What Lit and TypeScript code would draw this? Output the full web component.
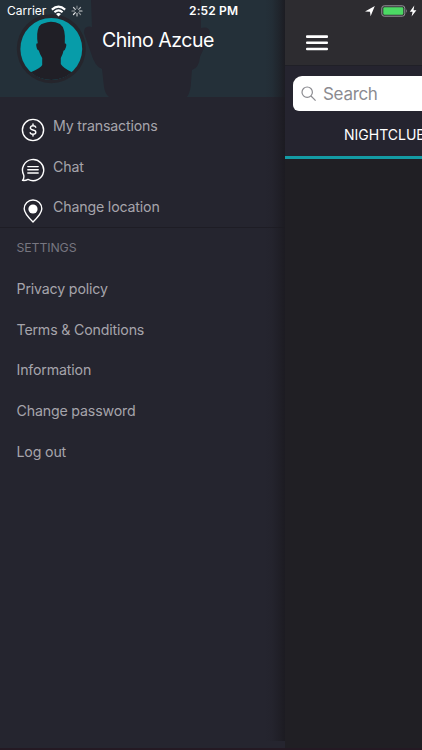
import { LitElement, html, css, svg } from "lit";
import { customElement } from "lit/decorators.js";

const coin = svg`<circle cx="12" cy="12" r="10.6"/><path d="M14.8 9.2Q14.3 7.8 12 7.8T9.3 9.8Q9.3 11.5 12 12T14.8 14.2Q14.8 16.2 12 16.2T9.2 14.6M12 6v1.8M12 16.2V18"/>`;
const chat = svg`<path d="M2.7 17A10.6 10.6 0 1 1 7 21.4Q4.5 22.8 1.5 22.4Q3.4 20.6 2.7 17Z"/><path d="M6.8 8.6H17.2M6.8 11.8H17.2M6.8 15H17.2"/>`;
const pin = svg`<path d="M12 23Q3.2 14.5 3.2 9.8A8.8 8.8 0 0 1 20.8 9.8Q20.8 14.5 12 23Z"/><circle cx="12" cy="10" r="4.6" fill="#fff" stroke="none"/>`;

@customElement("app-root")
export class AppRoot extends LitElement {
  static styles = css`
    :host {
      display: block;
      position: relative;
      width: 422px;
      height: 750px;
      overflow: hidden;
      background: #25252f;
      color: #fff;
      font-family: Inter, "Liberation Sans", sans-serif;
      white-space: nowrap;
    }
    svg { display: block; flex: none; }
    .layout { display: grid; grid-template-columns: 285px 1fr; height: 748px; border-bottom: 2px solid #241923; }
    .drawer { position: relative; overflow: hidden; }
    .drawer::after {
      content: "";
      position: absolute;
      inset: 0 0 7px auto;
      width: 20px;
      background: linear-gradient(90deg, #1b1a2000, #1b1a2020 35%, #1b1a2090 75%, #1b1a20e6);
      pointer-events: none;
    }
    .profile { position: relative; height: 97px; background: #243039; }
    .backdrop, .avatar { position: absolute; top: 0; left: 0; }
    .name {
      position: relative;
      padding: 27px 0 0 102px;
      font-size: 19.5px;
      line-height: 26px;
      letter-spacing: -0.48px;
    }
    .links { height: 131px; padding-top: 8px; box-sizing: border-box; border-bottom: 1px solid #1e1d25; }
    .link { display: flex; height: 40.7px; padding-left: 21px; gap: 8px; font-size: 14.2px; line-height: 42px; color: #a5a4ab; }
    .link svg { margin-top: 12.5px; fill: none; stroke: #fff; stroke-width: 1.4; stroke-linecap: round; stroke-linejoin: round; }
    .text, .item { letter-spacing: -0.17px; }
    .heading { padding-left: 16.5px; height: 40px; line-height: 40px; font-size: 12.3px; letter-spacing: -0.1px; color: #777680; }
    .item { padding-left: 16.5px; height: 40.7px; line-height: 42px; font-size: 14.2px; color: #a5a4ab; }
    .main { background: #201f24; overflow: hidden; }
    .bar { height: 66px; box-sizing: border-box; padding: 35px 0 0 21px; background: #2d2c30; border-bottom: 1px solid #202027; }
    .tools { height: 90px; background: #25242f; box-sizing: border-box; padding: 10px 0 0 8px; }
    .search {
      height: 35px;
      display: flex;
      align-items: center;
      gap: 6px;
      padding-left: 8px;
      border-radius: 9px 0 0 6px;
      background: #fff;
      color: #8b8b90;
      font-size: 17px;
      letter-spacing: -0.3px;
    }
    .tab { padding-left: 51px; line-height: 48px; font-size: 14px; }
    .underline { height: 3px; background: #149ba5; }
    .status { position: absolute; inset: 0 0 auto 0; height: 21px; display: grid; grid-template-columns: 189px 1fr auto; align-items: center; font-size: 12px; }
    .left, .right { display: flex; align-items: center; }
    .left { padding-left: 7px; gap: 5px; }
    .clock { font-weight: 600; letter-spacing: 0.15px; }
    .right { padding-right: 5px; }
  `;

  private link(icon: unknown, label: string) {
    return html`<div class="link"><svg width="24" height="24" viewBox="0 0 24 24">${icon}</svg><span class="text">${label}</span></div>`;
  }

  render() {
    return html`
      <div class="layout">
        <div class="drawer">
          <div class="profile">
            <svg class="backdrop" width="285" height="97" viewBox="0 0 285 97">
              <path fill="#25252f" d="M91 0L92 27Q84 25 84 33L91 53Q95 67 102 69L104 87Q105 94 109 97H187Q191 91 191 82L192 70Q199 68 200 57Q208 39 210 32Q209 26 201 28V0Z"/>
            </svg>
            <svg class="avatar" width="100" height="97" viewBox="0 0 100 97">
              <circle cx="51.3" cy="48.7" r="34.5" fill="#25252c"/>
              <circle cx="51.3" cy="48.9" r="30.9" fill="#079ca9"/>
              <path fill="#201f26" d="M30.6 72.2Q41 68 42.2 65V58Q39.7 54 38.8 50.5Q36.7 50 36.2 45Q36.3 42.5 37.8 43.5Q36 33 39 26.5Q41 23.5 44 23.2Q51.5 19.7 60 24Q66 28 64.8 43.5Q67 43 66 47Q65 50.5 63.5 50.8Q63 54 60.8 58V64Q63 68 72 72.2A31 31 0 0 1 30.6 72.2Z"/>
            </svg>
            <div class="name">Chino Azcue</div>
          </div>
          <div class="links">
            ${this.link(coin, "My transactions")}
            ${this.link(chat, "Chat")}
            ${this.link(pin, "Change location")}
          </div>
          <div class="heading">SETTINGS</div>
          ${["Privacy policy", "Terms & Conditions", "Information", "Change password", "Log out"].map(
            (t) => html`<div class="item">${t}</div>`
          )}
        </div>
        <div class="main">
          <div class="bar">
            <svg width="22" height="16" viewBox="0 0 22 16" fill="#fff">
              <rect y=".3" width="22" height="2.6" rx="1"/><rect y="6.5" width="22" height="2.6" rx="1"/><rect y="12.7" width="22" height="2.6" rx="1"/>
            </svg>
          </div>
          <div class="tools">
            <div class="search">
              <svg width="16" height="16" viewBox="0 0 16 16" fill="none" stroke="#8b8b90" stroke-width="1.2">
                <circle cx="6.2" cy="6.2" r="5.2"/><path d="M10 10L14.6 14.6"/>
              </svg>
              <span>Search</span>
            </div>
            <div class="tab">NIGHTCLUBS</div>
          </div>
          <div class="underline"></div>
        </div>
      </div>
      <div class="status">
        <div class="left">
          <span>Carrier</span>
          <svg width="15" height="12" viewBox="0 0 14 11" fill="none" stroke="#fff" stroke-width="2">
            <path d="M.8 4.2Q7-1.3 13.2 4.2M3.2 6.7Q7 3.3 10.8 6.7"/><path fill="#fff" stroke="none" d="M4.7 8.2Q7 6.5 9.3 8.2L7 10.7Z"/>
          </svg>
          <svg width="12" height="12" viewBox="0 0 12 12" stroke="#fff" stroke-width="1.2" stroke-linecap="round">
            ${[0, 45, 90, 135, 180, 225, 270, 315].map(
              (a, i) => svg`<path d="M6 1V3.6" transform=${`rotate(${a} 6 6)`} opacity=${0.4 + ((i * 3) % 8) * 0.07}/>`
            )}
          </svg>
        </div>
        <div class="clock">2:52 PM</div>
        <div class="right">
          <svg width="52" height="14" viewBox="0 0 52 14">
            <path fill="#fff" d="M0 7.4L9.8 2L5.6 12.2L5 7.7Z"/>
            <rect x="16.8" y="1.8" width="23" height="10.4" rx="2.4" fill="none" stroke="#96969a"/>
            <rect x="18.3" y="3.3" width="20" height="7.4" rx="1.2" fill="#4cd964"/>
            <path fill="#96969a" d="M41 5Q42.6 7 41 9Z"/>
            <path fill="#fff" d="M49.3 1.6L44.8 7.8H47.6L46.6 12.6L51.4 6.3H48.5Z"/>
          </svg>
        </div>
      </div>
    `;
  }
}
